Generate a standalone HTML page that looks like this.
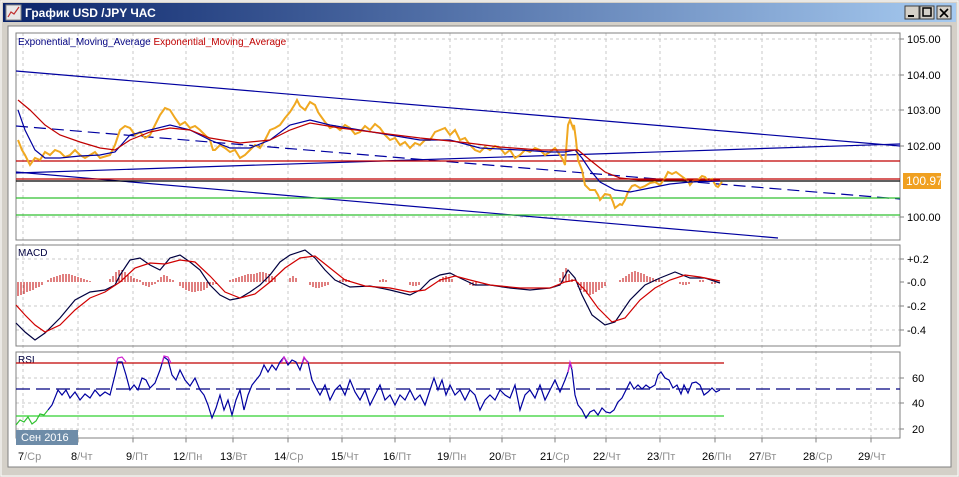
<!DOCTYPE html>
<html><head><meta charset="utf-8"><style>
html,body{margin:0;padding:0;width:959px;height:477px;overflow:hidden;background:#d4d0c8;font-family:"Liberation Sans",sans-serif}
</style></head><body>
<svg width="959" height="477" xmlns="http://www.w3.org/2000/svg" style="position:absolute;left:0;top:0" font-family="Liberation Sans, sans-serif">
<defs><linearGradient id="tb" x1="0" x2="1"><stop offset="0" stop-color="#0a246a"/><stop offset="1" stop-color="#a6caf0"/></linearGradient></defs>
<rect x="0" y="0" width="959" height="477" fill="#d4d0c8"/>
<rect x="1" y="1" width="957" height="475" fill="none" stroke="#fff"/>
<rect x="3" y="3" width="953" height="19" fill="url(#tb)"/>
<rect x="6" y="5" width="15" height="15" fill="#e8e8e8" stroke="#888"/>
<polyline points="8,17 11,12 14,14 19,7" fill="none" stroke="#c03030" stroke-width="1.2"/>
<text x="25" y="17" font-size="12" font-weight="bold" fill="#fff">График USD /JPY  ЧАС</text>
<g fill="#d4d0c8" stroke="#404040"><rect x="905" y="6" width="14" height="13"/><rect x="920" y="6" width="14" height="13"/><rect x="937" y="6" width="14" height="13"/></g>
<rect x="908" y="15" width="6" height="2" fill="#000"/>
<rect x="923" y="8" width="8" height="8" fill="none" stroke="#000" stroke-width="1.5"/>
<path d="M940,9 L948,17 M948,9 L940,17" stroke="#000" stroke-width="1.6"/>
<rect x="8" y="26" width="943" height="441" fill="#fff" stroke="#808080"/>
<!-- grid -->
<g stroke="#c8c8c8" stroke-dasharray="3,3">
<path d="M23,33V443M78,33V443M133,33V443M186,33V443M233,33V443M288,33V443M342,33V443M395,33V443M450,33V443M502,33V443M555,33V443M606,33V443M660,33V443M715,33V443M762,33V443M816,33V443M871,33V443"/>
<path d="M16,39H900M16,75H900M16,110H900M16,146H900M16,217H900M16,259H900M16,306H900M16,330H900M16,378H900M16,403H900M16,429H900"/>
</g>
<!-- panel frames -->
<g fill="none" stroke="#808080"><rect x="16" y="33" width="884" height="207"/><rect x="16" y="245" width="884" height="101"/><rect x="16" y="352" width="884" height="86"/></g>
<g stroke="#808080"><path d="M900,39h4M900,75h4M900,110h4M900,146h4M900,217h4M900,259h4M900,282h4M900,306h4M900,330h4M900,378h4M900,403h4M900,429h4"/>
<path d="M23,438v4M78,438v4M133,438v4M186,438v4M233,438v4M288,438v4M342,438v4M395,438v4M450,438v4M502,438v4M555,438v4M606,438v4M660,438v4M715,438v4M762,438v4M816,438v4M871,438v4"/></g>
<g font-size="11" fill="#000">
<text x="907" y="43">105.00</text><text x="907" y="79">104.00</text><text x="907" y="114">103.00</text><text x="907" y="150">102.00</text><text x="907" y="221">100.00</text>
<text x="907" y="263">+0.2</text><text x="907" y="286">-0.0</text><text x="907" y="310">-0.2</text><text x="907" y="334">-0.4</text>
<text x="912" y="382">60</text><text x="912" y="407">40</text><text x="912" y="433">20</text>
</g>
<rect x="903" y="173" width="38" height="16" fill="#f0a020"/><text x="906" y="185" font-size="12" fill="#fff">100.97</text>
<text x="18" y="45" font-size="10" fill="#000080">Exponential_Moving_Average <tspan fill="#c00000">Exponential_Moving_Average</tspan></text>
<text x="18" y="256" font-size="10" fill="#000040">MACD</text>
<text x="18" y="363" font-size="10" fill="#000040">RSI</text>
<!-- main lines -->
<g stroke-width="1.2" fill="none">
<line x1="16" y1="71" x2="900" y2="146" stroke="#0000a0"/>
<line x1="16" y1="173" x2="900" y2="144" stroke="#0000a0"/>
<line x1="16" y1="172" x2="778" y2="238" stroke="#0000a0"/>
<line x1="16" y1="126" x2="900" y2="199" stroke="#0000a0" stroke-dasharray="12,6"/>
<line x1="16" y1="161" x2="900" y2="161" stroke="#c00000"/>
<line x1="16" y1="179" x2="900" y2="179" stroke="#c00000"/>
<line x1="16" y1="181" x2="900" y2="181" stroke="#000"/>
<line x1="16" y1="198" x2="900" y2="198" stroke="#30c030"/>
<line x1="16" y1="215" x2="900" y2="215" stroke="#30c030"/>
<polyline stroke="#f0a820" stroke-width="2" points="18,140 22,150 25,155 30,165 35,158 40,160 45,152 50,155 55,150 60,152 65,157 70,155 75,150 80,155 85,158 95,152 100,158 110,155 115,145 120,130 125,126 130,128 135,135 140,132 145,138 150,135 155,125 160,115 165,108 170,110 175,118 180,125 185,122 190,128 195,126 200,130 205,135 210,140 213,150 215,150 220,145 225,148 230,152 235,150 240,158 245,155 250,150 255,145 260,148 265,140 270,130 275,128 280,125 285,118 290,112 295,104 297,100 300,106 305,110 310,102 315,105 318,112 320,115 325,122 330,128 335,126 340,130 345,125 350,128 355,134 360,132 365,126 370,130 375,124 380,128 385,135 390,140 395,138 400,145 405,142 410,148 415,143 420,145 425,140 430,140 435,132 440,130 445,128 450,135 455,130 460,140 465,138 470,145 475,150 480,152 485,147 490,150 495,146 500,148 505,154 510,150 515,158 520,155 525,150 530,152 535,148 540,150 545,155 550,152 555,148 560,155 563,160 565,165 568,125 570,120 573,128 574,125 576,140 578,160 582,170 585,185 590,190 595,190 598,195 600,200 605,194 610,195 613,202 615,208 620,204 622,205 625,200 628,192 632,186 635,185 640,188 645,186 650,183 655,182 660,185 665,178 668,172 672,174 676,172 680,175 684,178 688,181 690,185 694,180 698,180 702,176 705,177 708,181 712,179 716,186 718,187 722,182"/>
<polyline stroke="#0000a0" points="18,110 25,130 35,150 45,158 60,158 80,156 100,155 115,152 130,135 150,130 170,125 190,130 210,140 230,148 250,148 270,140 290,125 310,120 330,125 360,130 390,135 420,140 450,140 480,148 520,150 550,152 565,152 575,150 582,158 590,170 600,182 615,190 630,192 650,188 670,184 690,182 720,181"/>
<polyline stroke="#c00000" points="18,100 30,110 45,125 60,135 80,142 100,148 115,150 130,140 150,132 170,128 190,130 210,138 240,143 270,140 290,130 310,123 340,128 380,133 420,138 460,142 500,147 540,150 565,150 578,150 590,160 605,172 620,178 640,180 670,180 700,180 720,180"/>
</g>
<!-- MACD histogram -->
<g stroke="#c00000" stroke-width="1">
<path d="M18,282v14M21,282v13M24,282v12M27,282v10M30,282v9M33,282v8M36,282v6M39,282v5M42,282v3M48,282v-2M51,282v-4M54,282v-5M57,282v-6M60,282v-7M63,282v-8M66,282v-8M69,282v-8M72,282v-7M75,282v-6M78,282v-5M81,282v-4M84,282v-3M87,282v-2M90,282v-1M110,282v-3M113,282v-6M116,282v-10M119,282v-12M122,282v-12M125,282v-10M128,282v-8M131,282v-6M134,282v-4M137,282v-3M140,282v-2M143,282v3M146,282v4M149,282v5M152,282v3M155,282v2M158,282v-2M161,282v-5M164,282v-7M167,282v-6M170,282v-3M173,282v-2M180,282v4M183,282v6M186,282v8M189,282v9M192,282v10M195,282v10M198,282v9M201,282v9M204,282v8M207,282v6M210,282v4M213,282v3M216,282v2M230,282v-2M233,282v-3M236,282v-4M239,282v-5M242,282v-6M245,282v-7M248,282v-8M251,282v-8M254,282v-8M257,282v-9M260,282v-10M263,282v-10M266,282v-9M269,282v-8M272,282v-6M275,282v-4M290,282v-4M293,282v-6M296,282v-4M310,282v3M313,282v5M316,282v6M319,282v6M322,282v5M325,282v4M328,282v3M340,282v-2M343,282v-3M346,282v-3M349,282v-2M380,282v-2M383,282v-3M386,282v-2M410,282v3M413,282v4M416,282v4M419,282v3M440,282v-3M443,282v-5M446,282v-6M449,282v-5M452,282v-3M470,282v3M473,282v4M476,282v3M560,282v-4M563,282v-10M566,282v-14M569,282v-8M572,282v-3M578,282v5M581,282v8M584,282v10M587,282v12M590,282v13M593,282v12M596,282v10M599,282v8M602,282v6M605,282v4M620,282v-2M623,282v-4M626,282v-6M629,282v-8M632,282v-10M635,282v-11M638,282v-10M641,282v-9M644,282v-8M647,282v-6M650,282v-5M653,282v-4M656,282v-3M659,282v-3M662,282v-2M680,282v2M683,282v3M686,282v3M689,282v2M700,282v-2M703,282v-2M712,282v2M715,282v2M718,282v1"/>
</g>
<g fill="none" stroke-width="1.2">
<polyline stroke="#000040" points="16,323 25,332 35,340 45,333 60,318 75,300 90,292 105,290 115,285 120,275 130,260 140,258 150,265 160,270 170,258 180,255 190,262 200,270 210,285 220,295 230,300 240,298 250,292 260,285 270,275 280,262 290,255 305,250 315,258 325,270 335,280 350,287 370,286 390,290 410,295 420,290 430,280 440,275 450,273 460,278 475,285 490,285 510,288 530,290 550,288 560,285 568,270 575,278 582,295 592,315 605,325 615,322 630,300 645,285 660,278 675,272 690,278 705,278 720,283"/>
<polyline stroke="#d00000" points="16,305 25,315 35,325 45,332 60,325 75,310 90,298 105,292 120,282 135,268 150,263 165,264 180,260 195,262 210,276 225,292 240,298 255,294 270,282 285,268 300,258 315,256 330,268 345,280 365,286 390,288 410,292 425,290 440,280 455,276 470,280 490,285 520,288 550,288 565,282 575,280 585,290 598,308 612,322 625,318 640,300 655,288 670,280 685,275 700,277 720,281"/>
</g>
<!-- RSI -->
<line x1="16" y1="363" x2="724" y2="363" stroke="#c00000" stroke-width="1.2"/>
<line x1="16" y1="389" x2="900" y2="389" stroke="#000080" stroke-width="1.2" stroke-dasharray="14,6"/>
<line x1="16" y1="416" x2="724" y2="416" stroke="#30d030" stroke-width="1.2"/>
<polyline fill="none" stroke="#30c030" stroke-width="1.2" points="16,425 20,420 24,422 28,417 32,424 36,421 40,414 44,415 48,410"/>
<polyline fill="none" stroke="#0000a0" stroke-width="1.2" points="48,410 52,405 58,390 62,395 66,390 70,398 75,392 80,400 85,394 90,398 95,390 100,396 105,392 110,395 115,375 118,362 122,362 126,375 130,390 134,385 138,390 142,378 146,380 150,388 155,383 160,370 164,357 168,360 172,375 176,380 180,370 185,380 190,386 195,378 200,390 204,395 208,405 212,418 216,408 220,395 224,410 228,400 232,415 236,400 240,390 244,410 248,395 252,385 256,380 260,375 264,365 268,372 272,365 276,370 280,362 284,357 288,365 292,360 296,362 300,370 304,358 308,362 312,380 316,388 320,395 325,385 330,400 335,390 340,385 345,395 350,380 355,392 360,400 365,390 370,405 375,395 380,385 385,400 390,395 395,405 400,395 405,400 410,390 415,400 420,395 425,405 430,390 434,378 438,390 442,380 446,395 450,385 455,395 460,390 465,400 470,390 475,395 480,410 485,400 490,395 495,400 500,390 505,395 510,398 515,385 520,410 525,395 530,390 535,398 540,385 545,400 550,390 555,380 560,392 565,380 568,372 570,363 572,370 575,395 578,405 582,410 586,418 590,412 594,410 598,415 602,408 606,412 610,413 614,410 618,402 622,398 626,390 630,382 634,389 638,385 642,389 646,385 650,388 655,385 658,375 661,372 665,378 669,380 673,388 677,385 681,394 684,385 688,393 692,383 696,382 700,385 704,395 708,392 712,388 716,392 720,390"/>
<polyline fill="none" stroke="#d020d0" stroke-width="1.2" points="116,363 118,358 122,357 126,362"/>
<polyline fill="none" stroke="#d020d0" stroke-width="1.2" points="162,363 164,356 168,357 171,363"/>
<polyline fill="none" stroke="#d020d0" stroke-width="1.2" points="281,363 284,357 288,363"/>
<polyline fill="none" stroke="#d020d0" stroke-width="1.2" points="302,363 304,357 308,363"/>
<polyline fill="none" stroke="#d020d0" stroke-width="1.2" points="568,372 570,362 572,368"/>
<rect x="16" y="430" width="62" height="15" fill="#6e8ca8"/><text x="21" y="441" font-size="11" fill="#fff">Сен 2016</text>
<g font-size="11" fill="#000">
<text x="18" y="460">7<tspan fill="#909090">/Ср</tspan></text><text x="71" y="460">8<tspan fill="#909090">/Чт</tspan></text><text x="126" y="460">9<tspan fill="#909090">/Пт</tspan></text><text x="173" y="460">12<tspan fill="#909090">/Пн</tspan></text><text x="220" y="460">13<tspan fill="#909090">/Вт</tspan></text><text x="274" y="460">14<tspan fill="#909090">/Ср</tspan></text><text x="331" y="460">15<tspan fill="#909090">/Чт</tspan></text><text x="383" y="460">16<tspan fill="#909090">/Пт</tspan></text><text x="437" y="460">19<tspan fill="#909090">/Пн</tspan></text><text x="489" y="460">20<tspan fill="#909090">/Вт</tspan></text><text x="540" y="460">21<tspan fill="#909090">/Ср</tspan></text><text x="593" y="460">22<tspan fill="#909090">/Чт</tspan></text><text x="647" y="460">23<tspan fill="#909090">/Пт</tspan></text><text x="702" y="460">26<tspan fill="#909090">/Пн</tspan></text><text x="749" y="460">27<tspan fill="#909090">/Вт</tspan></text><text x="803" y="460">28<tspan fill="#909090">/Ср</tspan></text><text x="858" y="460">29<tspan fill="#909090">/Чт</tspan></text>
</g>
</svg>
</body></html>
